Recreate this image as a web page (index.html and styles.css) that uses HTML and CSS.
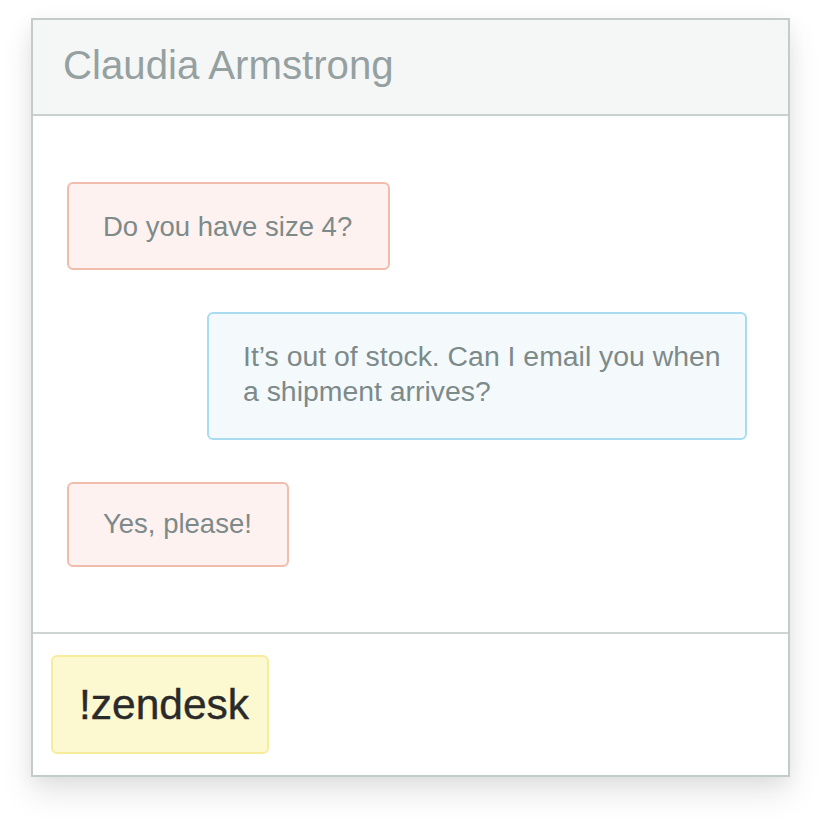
FILE: index.html
```html
<!DOCTYPE html>
<html lang="en">
<head>
<meta charset="utf-8">
<title>Chat</title>
<link rel="stylesheet" href="styles.css">
</head>
<body>
<div class="window">
  <div class="header">Claudia Armstrong</div>
  <div class="messages">
    <div class="bubble customer b1">Do you have size 4?</div>
    <div class="bubble agent b2">It’s out of stock. Can I email you when a shipment arrives?</div>
    <div class="bubble customer b3">Yes, please!</div>
  </div>
  <div class="footer">
    <div class="badge">!zendesk</div>
  </div>
</div>
</body>
</html>
```
FILE: styles.css
```css
html, body {
  margin: 0;
  padding: 0;
  background: #ffffff;
}
body {
  font-family: "Liberation Sans", Arial, Helvetica, sans-serif;
  padding: 18px 0 0 31px;
  min-height: 820px;
  box-sizing: border-box;
}
.window {
  width: 759px;
  box-sizing: border-box;
  border: 2px solid #c3cbcb;
  background: #ffffff;
  box-shadow: 0 16px 30px rgba(0, 0, 0, 0.10), 0 4px 16px rgba(0, 0, 0, 0.05);
  display: flex;
  flex-direction: column;
}
.header {
  height: 96px;
  box-sizing: border-box;
  background: #f5f7f7;
  border-bottom: 2px solid #c9d0d0;
  padding: 0 0 2px 30px;
  display: flex;
  align-items: center;
  font-size: 40.2px;
  color: #95a1a1;
}
.messages {
  display: flex;
  flex-direction: column;
  align-items: flex-start;
  gap: 42px;
  padding: 66px 41px 65px 34px;
  border-bottom: 2px solid #cfd5d5;
}
.bubble {
  box-sizing: border-box;
  border: 2px solid;
  border-radius: 6px;
  font-size: 27.5px;
  line-height: 35px;
  color: #7d8a8a;
  padding: 25px 36px 24px 34px;
}
.customer {
  background: #fdf2f0;
  border-color: #f1bcab;
}
.agent {
  background: #f4f9fc;
  border-color: #a9dcf0;
  align-self: flex-end;
  width: 540px;
  font-size: 28.4px;
  padding-right: 20px;
  padding-bottom: 29px;
}
.b3 {
  padding-top: 22px;
  padding-right: 35px;
  padding-bottom: 24px;
}
.footer {
  padding: 21px 18px 21px 18px;
  display: flex;
}
.badge {
  box-sizing: border-box;
  width: 218px;
  height: 99px;
  background: #fcf8d0;
  border: 2px solid #f6ec9c;
  border-radius: 6px;
  display: flex;
  align-items: center;
  padding: 0 0 0 26px;
  font-size: 42.5px;
  color: #2a2a2a;
  -webkit-text-stroke: 0.4px #2a2a2a;
}
```
